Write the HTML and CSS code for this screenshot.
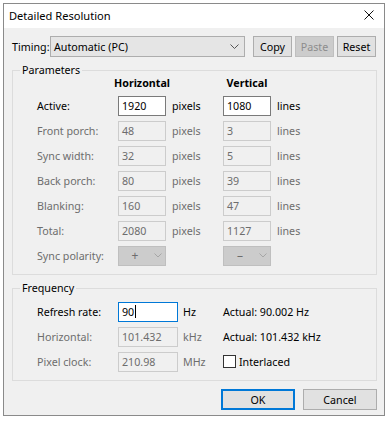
FILE: index.html
```html
<!DOCTYPE html>
<html>
<head>
<meta charset="utf-8">
<title>Detailed Resolution</title>
<link rel="stylesheet" href="styles.css">
</head>
<body>
<div class="window">
  <div class="titlebar">
    <span class="title">Detailed Resolution</span>
    <svg class="close" width="10" height="10" viewBox="0 0 10 10"><path d="M0.5 0.5L9.5 9.5M9.5 0.5L0.5 9.5" stroke="#111" stroke-width="1" fill="none"/></svg>
  </div>
  <div class="content">
    <div class="timing-row">
      <span class="tlabel">Timing:</span>
      <div class="combo"><span>Automatic (PC)</span><svg width="9" height="5" viewBox="0 0 9 5"><path d="M0.5 0.5L4.5 4.5L8.5 0.5" fill="none" stroke="#555" stroke-width="1"/></svg></div>
      <div class="btn first">Copy</div>
      <div class="btn disabled">Paste</div>
      <div class="btn">Reset</div>
    </div>

    <fieldset class="group">
      <legend>Parameters</legend>
      <div class="pgrid">
        <span></span><span class="head">Horizontal</span><span></span><span class="head">Vertical</span><span></span>

        <span class="lbl">Active:</span>
        <div class="input">1920</div><span class="unit">pixels</span>
        <div class="input">1080</div><span class="unit">lines</span>

        <span class="lbl dis">Front porch:</span>
        <div class="input off">48</div><span class="unit dis">pixels</span>
        <div class="input off">3</div><span class="unit dis">lines</span>

        <span class="lbl dis">Sync width:</span>
        <div class="input off">32</div><span class="unit dis">pixels</span>
        <div class="input off">5</div><span class="unit dis">lines</span>

        <span class="lbl dis">Back porch:</span>
        <div class="input off">80</div><span class="unit dis">pixels</span>
        <div class="input off">39</div><span class="unit dis">lines</span>

        <span class="lbl dis">Blanking:</span>
        <div class="input off">160</div><span class="unit dis">pixels</span>
        <div class="input off">47</div><span class="unit dis">lines</span>

        <span class="lbl dis">Total:</span>
        <div class="input off">2080</div><span class="unit dis">pixels</span>
        <div class="input off">1127</div><span class="unit dis">lines</span>

        <span class="lbl dis">Sync polarity:</span>
        <div class="select"><span class="sign">+</span><svg width="8" height="5" viewBox="0 0 8 5"><path d="M0.5 0.5L4 4L7.5 0.5" fill="none" stroke="#a6a6a6" stroke-width="1"/></svg></div>
        <span></span>
        <div class="select"><span class="sign">&ndash;</span><svg width="8" height="5" viewBox="0 0 8 5"><path d="M0.5 0.5L4 4L7.5 0.5" fill="none" stroke="#a6a6a6" stroke-width="1"/></svg></div>
        <span></span>
      </div>
    </fieldset>

    <fieldset class="group freq">
      <legend>Frequency</legend>
      <div class="fgrid">
        <span class="lbl">Refresh rate:</span>
        <div class="input focus">90<span class="caret"></span></div>
        <span class="unit">Hz</span>
        <span class="actual">Actual: 90.002 Hz</span>

        <span class="lbl dis">Horizontal:</span>
        <div class="input off">101.432</div>
        <span class="unit dis">kHz</span>
        <span class="actual">Actual: 101.432 kHz</span>

        <span class="lbl dis">Pixel clock:</span>
        <div class="input off">210.98</div>
        <span class="unit dis">MHz</span>
        <label class="check"><span class="box"></span>Interlaced</label>
      </div>
    </fieldset>

    <div class="buttons">
      <div class="dbtn default">OK</div>
      <div class="dbtn">Cancel</div>
    </div>
  </div>
</div>
</body>
</html>
```

FILE: styles.css
```css
html, body {
  margin: 0;
  padding: 0;
}
body {
  width: 389px;
  height: 421px;
  overflow: hidden;
  background: #ffffff;
  font-family: "Noto Sans", "Open Sans", sans-serif;
  font-size: 10.7px;
  color: #000;
}
.window {
  margin: 3px 0 0 3px;
  width: 380px;
  height: 411px;
  border: 1px solid #8a8a8a;
  background: #f0f0f0;
  display: flex;
  flex-direction: column;
}
.titlebar {
  height: 24px;
  background: #fff;
  display: flex;
  align-items: center;
  justify-content: space-between;
  padding: 0 10px 2px 5px;
  box-sizing: border-box;
}
.title {
  font-size: 11.1px;
}
.close {
  display: block;
}
.content {
  padding: 8px 7px 0 8px;
  display: flex;
  flex-direction: column;
}
.timing-row {
  display: flex;
  align-items: center;
  height: 21px;
}
.tlabel {
  width: 38px;
  flex: none;
}
.combo {
  width: 195px;
  height: 21px;
  box-sizing: border-box;
  border: 1px solid #adadad;
  background: #e5e5e5;
  display: flex;
  align-items: center;
  justify-content: space-between;
  padding: 0 5px 0 3px;
  flex: none;
}
.combo svg {
  display: block;
}
.btn {
  width: 39px;
  height: 21px;
  box-sizing: border-box;
  border: 1px solid #adadad;
  background: #e1e1e1;
  display: flex;
  align-items: center;
  justify-content: center;
  margin-left: 3px;
  flex: none;
}
.btn.first {
  margin-left: 8px;
}
.btn.disabled {
  background: #cccccc;
  border-color: #bfbfbf;
  color: #8d8d8d;
}
.group {
  margin: 6px 0 0 0;
  padding: 0;
  border: 1px solid #dcdcdc;
  min-width: 0;
}
.group legend {
  margin-left: 7px;
  padding: 0 2px;
  line-height: 14px;
  height: 14px;
}
.pgrid {
  display: grid;
  grid-template-columns: 81px 48px 57px 48px 1fr;
  grid-template-rows: 16px repeat(7, 25px);
  align-items: center;
  margin: 0 0 6px 24px;
}
.head {
  font-weight: bold;
  justify-self: center;
  align-self: start;
  line-height: 12px;
  white-space: nowrap;
}
.lbl {
  white-space: nowrap;
}
.dis {
  color: #6d6d6d;
}
.unit {
  padding-left: 6px;
  white-space: nowrap;
}
.input {
  height: 20px;
  box-sizing: border-box;
  border: 1px solid #7a7a7a;
  background: #fff;
  padding-left: 3px;
  display: flex;
  align-items: center;
}
.input.off {
  border-color: #cccccc;
  background: #f0f0f0;
  color: #6d6d6d;
}
.input.focus {
  border-color: #0078d7;
}
.caret {
  display: inline-block;
  width: 1px;
  height: 13px;
  background: #000;
  margin-left: 1px;
}
.select {
  height: 20px;
  box-sizing: border-box;
  border: 1px solid #bfbfbf;
  background: #cccccc;
  display: flex;
  align-items: center;
  color: #6d6d6d;
}
.select .sign {
  width: 32px;
  text-align: center;
  font-size: 12px;
}
.select svg {
  display: block;
  margin-left: 3px;
}
.freq {
  margin-top: 6px;
}
.fgrid {
  display: grid;
  grid-template-columns: 81px 60px 45px 1fr;
  grid-template-rows: repeat(3, 25px);
  align-items: center;
  margin: 4px 0 6px 24px;
}
.fgrid .unit {
  padding-left: 5px;
}
.actual {
  white-space: nowrap;
}
.check {
  display: flex;
  align-items: center;
  gap: 3px;
}
.box {
  width: 13px;
  height: 13px;
  box-sizing: border-box;
  border: 1px solid #333;
  background: #fff;
}
.buttons {
  display: flex;
  justify-content: flex-end;
  gap: 8px;
  margin-top: 8px;
}
.dbtn {
  width: 74px;
  height: 21px;
  box-sizing: border-box;
  border: 1px solid #adadad;
  background: #e1e1e1;
  display: flex;
  align-items: center;
  justify-content: center;
}
.dbtn.default {
  border: 2px solid #0078d7;
}
```
